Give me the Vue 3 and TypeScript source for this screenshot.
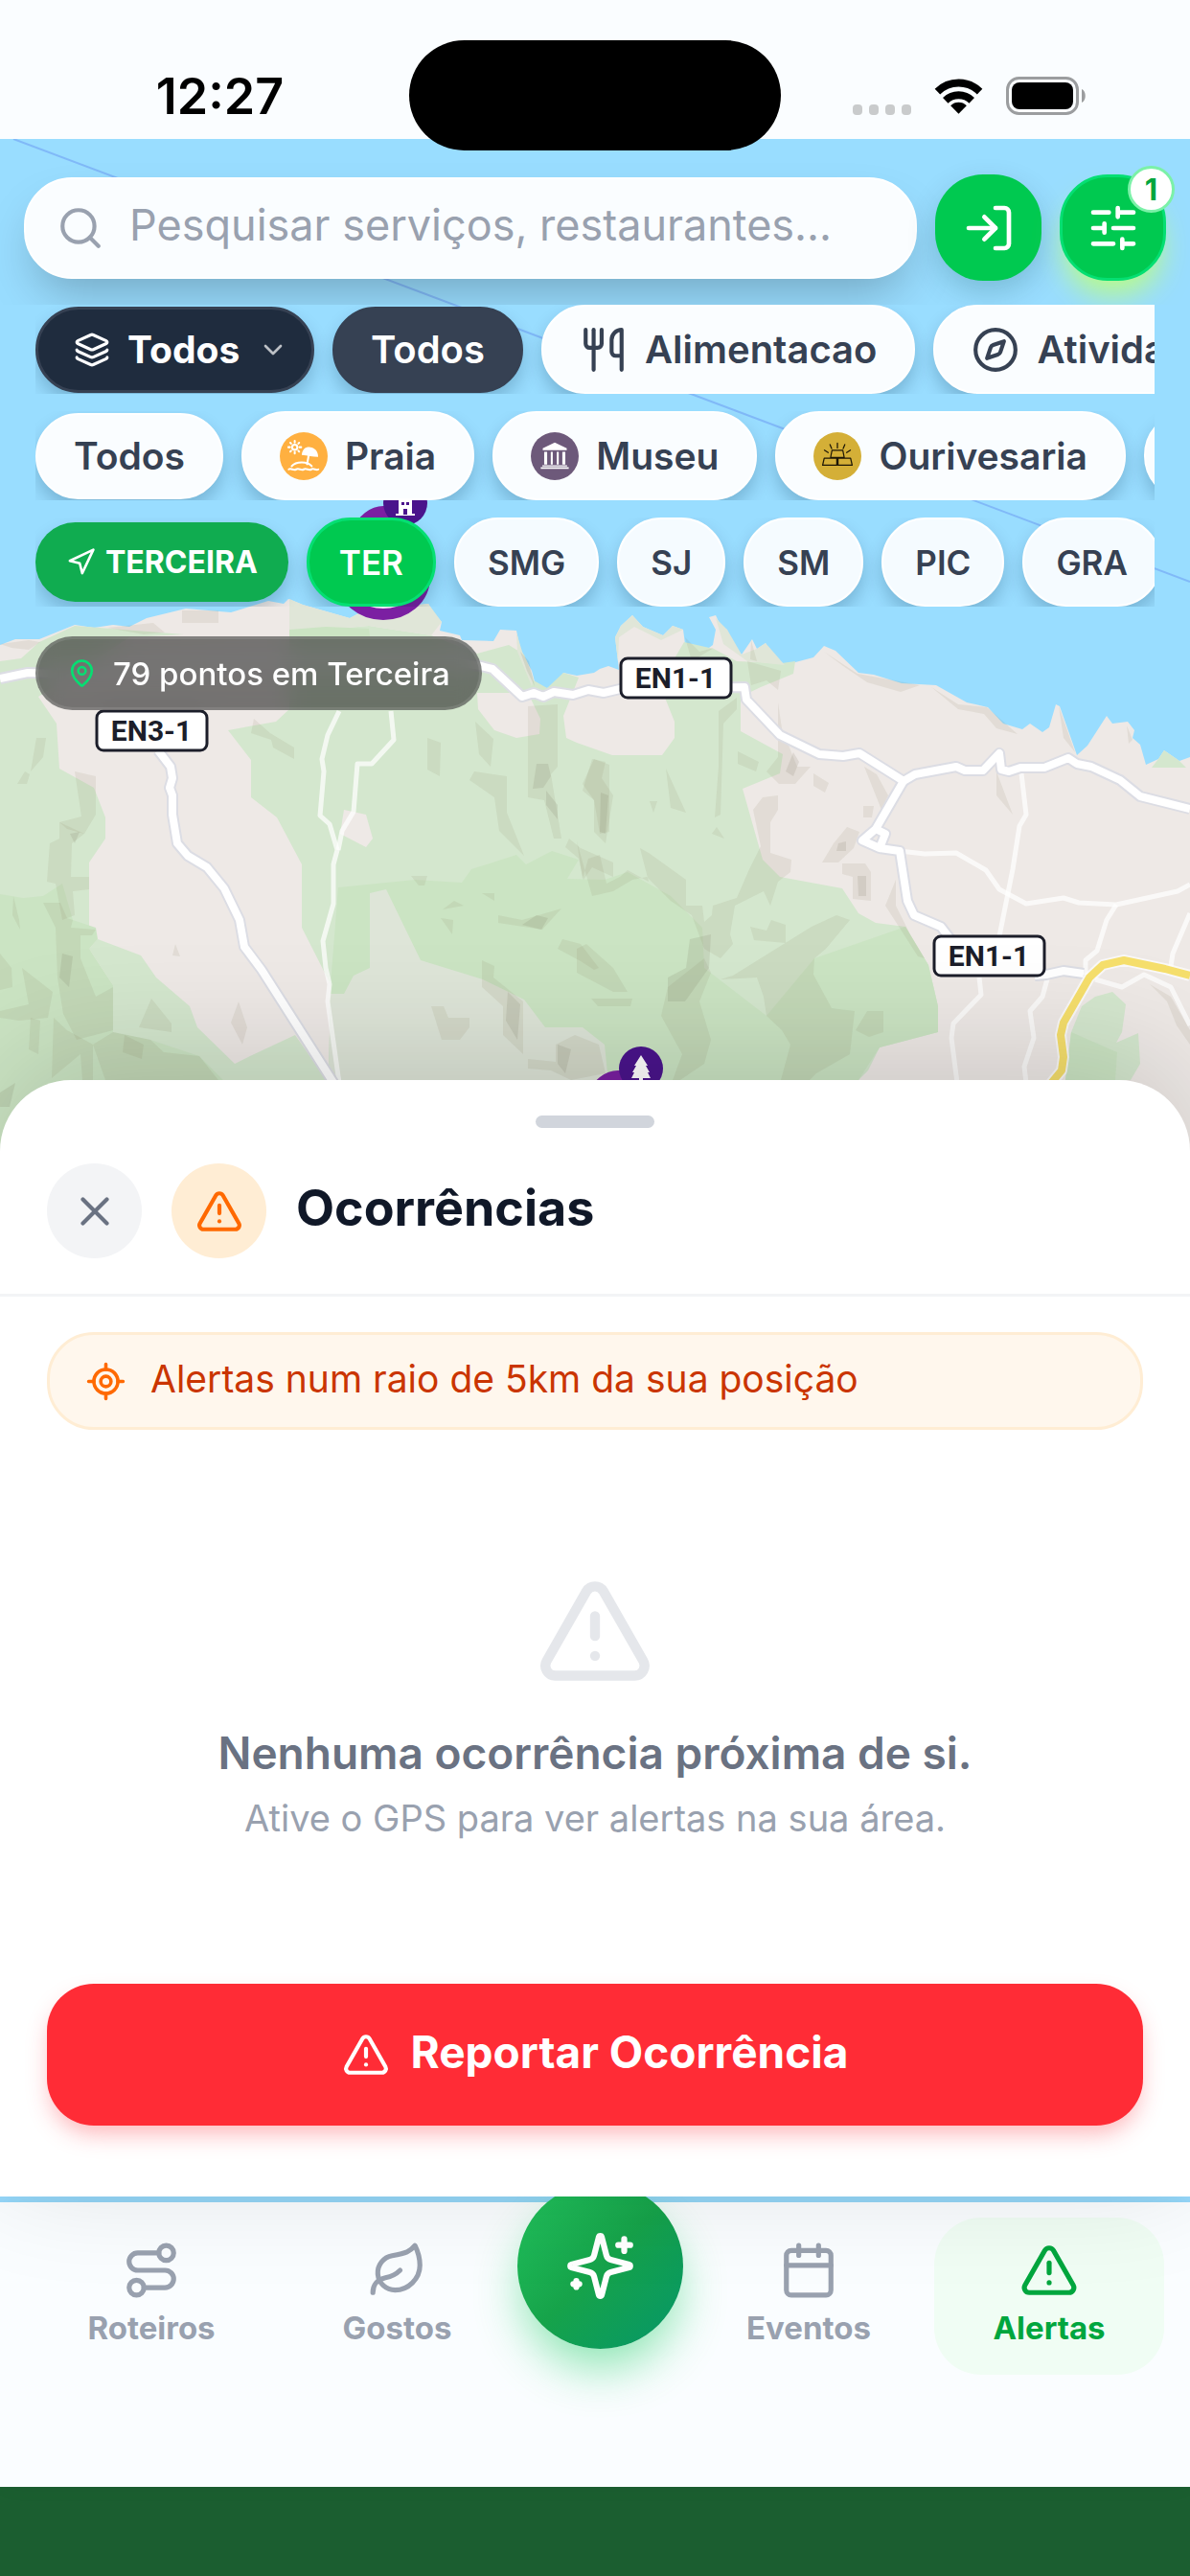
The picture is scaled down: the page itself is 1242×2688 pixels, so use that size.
<script setup lang="ts">
import { h, ref } from 'vue'

const icons: Record<string, string> = {
  search: '<path d="m21 21-4.34-4.34"/><circle cx="11" cy="11" r="8"/>',
  login: '<path d="m10 17 5-5-5-5"/><path d="M15 12H3"/><path d="M15 3h4a2 2 0 0 1 2 2v14a2 2 0 0 1-2 2h-4"/>',
  sliders:
    '<path d="M10 5H3M12 19H3M14 3v4M16 17v4M21 12h-9M21 19h-5M21 5h-7M8 10v4M8 12H3"/>',
  layers:
    '<path d="M12.83 2.18a2 2 0 0 0-1.66 0L2.6 6.08a1 1 0 0 0 0 1.83l8.58 3.91a2 2 0 0 0 1.66 0l8.58-3.9a1 1 0 0 0 0-1.83z"/><path d="M2 12a1 1 0 0 0 .58.91l8.6 3.91a2 2 0 0 0 1.65 0l8.58-3.9A1 1 0 0 0 22 12"/><path d="M2 17a1 1 0 0 0 .58.91l8.6 3.91a2 2 0 0 0 1.65 0l8.58-3.9A1 1 0 0 0 22 17"/>',
  chevron: '<path d="m6 9 6 6 6-6"/>',
  utensils:
    '<path d="M3 2v7c0 1.1.9 2 2 2h4a2 2 0 0 0 2-2V2"/><path d="M7 2v20"/><path d="M21 15V2a5 5 0 0 0-5 5v6c0 1.1.9 2 2 2h3Zm0 0v7"/>',
  compass:
    '<circle cx="12" cy="12" r="10"/><path d="m16.24 7.76-1.804 5.411a2 2 0 0 1-1.265 1.265L7.76 16.24l1.804-5.411a2 2 0 0 1 1.265-1.265z"/>',
  navigation: '<path d="M3 11 22 2 13 21 11 13Z"/>',
  pin: '<path d="M20 10c0 4.993-5.539 10.193-7.399 11.799a1 1 0 0 1-1.202 0C9.539 20.193 4 14.993 4 10a8 8 0 0 1 16 0"/><circle cx="12" cy="10" r="3"/>',
  close: '<path d="M18 6 6 18"/><path d="m6 6 12 12"/>',
  alert:
    '<path d="m21.73 18-8-14a2 2 0 0 0-3.48 0l-8 14A2 2 0 0 0 4 21h16a2 2 0 0 0 1.73-3"/><path d="M12 9v4"/><path d="M12 17h.01"/>',
  locate:
    '<path d="M2 12h3M19 12h3M12 2v3M12 19v3"/><circle cx="12" cy="12" r="7"/><circle cx="12" cy="12" r="3"/>',
  route:
    '<circle cx="6" cy="19" r="3"/><path d="M9 19h8.5a3.5 3.5 0 0 0 0-7h-11a3.5 3.5 0 0 1 0-7H15"/><circle cx="18" cy="5" r="3"/>',
  leaf: '<path d="M11 20A7 7 0 0 1 9.8 6.1C15.5 5 17 4.48 19 2c1 2 2 4.18 2 8 0 5.5-4.78 10-10 10Z"/><path d="M2 21c0-3 1.85-5.36 5.08-6C9.5 14.52 12 13 13 12"/>',
  calendar: '<path d="M8 2v4M16 2v4"/><rect width="18" height="18" x="3" y="4" rx="2"/><path d="M3 10h18"/>',
  sparkles:
    '<path d="M9.937 15.5A2 2 0 0 0 8.5 14.063l-6.135-1.582a.5.5 0 0 1 0-.962L8.5 9.936A2 2 0 0 0 9.937 8.5l1.582-6.135a.5.5 0 0 1 .963 0L14.063 8.5A2 2 0 0 0 15.5 9.937l6.135 1.581a.5.5 0 0 1 0 .964L15.5 14.063a2 2 0 0 0-1.437 1.437l-1.582 6.135a.5.5 0 0 1-.963 0z"/><path d="M20 3v4M22 5h-4M4 17v2M5 18H3"/>',
  beach:
    '<g fill="none" stroke="#fff" stroke-width="1"><circle cx="7.500" cy="7.500" r="1.300"/><path d="M7.500 4.300v.8M7.500 9.900v.8M4.300 7.500h.8M9.900 7.500h.8M5.300 5.300l.4.4M9.300 9.300l.4.4M5.300 9.700l.4-.4M9.300 5.700l.4-.4"/><path d="M14.500 11.500 13.700 16"/><path d="M6 17c2-2.500 8-2.500 10 0M4.500 18.600c1.200-.8 2.300.8 3.700 0s2.500.8 3.800 0 2.500.8 3.800 0 2.300.8 3.500 0"/></g><path d="M11 11.400c.3-3 2-4.200 4.300-3.900s4 2 3.900 4.900c-2.600-.2-5.400-.6-8.200-1z" fill="#fff"/>',
  museum:
    '<path fill="#fff" d="M12 5.200 18 8v1H6V8zM6.700 9.800h1.500v6.400H6.700zM10 9.800h1v6.400h-1zM13 9.800h1v6.400h-1zM15.800 9.800h1.500v6.400h-1.500zM5.800 16.600h12.400v.6H5.800zM5 17.500h14v.9H5z"/>',
  gold: '<g fill="none" stroke="#1c1606" stroke-width=".6"><path d="M9.300 9h5.400l.7 3.600H8.600zM5.400 13h6.300v3.500H4.600zM12.300 13h6.300l.8 3.500h-7.100zM12 5.500v2.400M8.300 6.200l.8 2M15.700 6.200l-.8 2M5.500 9l1.900 1.200M18.500 9l-1.900 1.200"/></g>',
}

const solid: Record<string, boolean> = { beach: true, museum: true, gold: true }

const Icon = (props: { name: string; stroke?: number }) =>
  h('svg', {
    viewBox: '0 0 24 24',
    fill: 'none',
    stroke: props.name in solid ? 'none' : 'currentColor',
    'stroke-width': props.stroke ?? 2,
    'stroke-linecap': 'round',
    'stroke-linejoin': 'round',
    'aria-hidden': 'true',
    innerHTML: icons[props.name],
  })
Icon.props = ['name', 'stroke']

const query = ref('')
const group = ref('Todos')

const categories = [
  { label: 'Alimentacao', icon: 'utensils' },
  { label: 'Atividades', icon: 'compass' },
]
const types = [
  { label: 'Praia', icon: 'beach', tone: 'amber' },
  { label: 'Museu', icon: 'museum', tone: 'plum' },
  { label: 'Ourivesaria', icon: 'gold', tone: 'gold' },
]
const islands = ['TER', 'SMG', 'SJ', 'SM', 'PIC', 'GRA']

const shades = [
  '38,770 48,770 45,790 32,805', '26,805 31,808 28,818 18,818', '78,805 100,810 100,850 88,870 70,865 62,858 85,852',
  '52,880 62,875 62,858 88,870 75,880 74,915 93,915 93,928 76,930 78,955 65,960 58,922 49,920',
  '45,942 63,942 70,958 76,960 74,968 100,970 96,976 84,976 84,1000 100,1040 118,1030 118,1075 80,1085 66,1058 60,1020 58,968',
  '0,995 12,1010 13,1030 0,1033', '23,1010 55,1035 50,1062 20,1065 0,1062 0,1055 30,1048', '32,1062 42,1065 40,1100 30,1095',
  '56,1062 70,1075 97,1090 97,1127 86,1127 84,1100 54,1125', '14,935 20,960 21,970 13,955',
  '118,1077 157,1085 171,1098 208,1102 228,1127 110,1127 97,1090',
  '158,1042 179,1068 179,1077 145,1072', '130,1080 150,1090 148,1105 128,1098',
  '265,750 282,765 307,780 307,792 285,780 283,772 262,765', '183,985 188,998 180,997', '249,1045 258,1072 253,1090 241,1067',
  '446,770 460,775 459,810 446,803', '496,753 515,771 512,800 500,787', '495,805 529,810 529,848 547,893 521,867 516,832 490,814',
  '551,737 582,735 582,800 575,808 586,875 578,875 568,835 551,832', '618,792 632,795 628,812 640,830 632,880 620,868 620,835 608,825',
  '429,914 446,914 443,924 437,924', '594,875 606,885 640,900 640,915 618,905 609,918 604,896 590,884',
  '503,932 516,932 516,940', '474,940 484,945 462,949', '460,958 473,960 472,975', '520,955 545,960 586,948 566,970 520,963',
  '587,980 606,985 625,1010 620,1012 606,1003 582,990', '503,1002 516,1008 515,1020 546,1045 546,1100 525,1080 525,1050 503,1030',
  '450,1050 463,1050 468,1062 490,1062 490,1072 480,1085 461,1085', '551,1105 580,1108 580,1090 600,1080 625,1090 632,1120 596,1127 575,1117 551,1115',
  '602,878 608,917 614,896 626,892 633,922 647,915 655,908 677,920 668,885 677,890 716,918 716,945 733,945 735,962 743,955 744,945 769,937 782,907 794,883 786,845 796,832 812,830 812,845 804,858 804,890 826,897 825,910 812,920 804,945 797,930 767,945 762,975 765,985 752,1000 735,990 722,955 700,940 690,930 675,915 660,918 640,930 618,935',
  '752,1022 765,1018 847,967 873,955 887,960 862,990 850,1000 849,1017 868,1052 892,1055 887,1100 852,1120 845,1127 815,1127 825,1090 816,1075 800,1060 797,1040 790,1020',
  '697,1030 735,1000 742,1015 730,1045 742,1085 735,1110 710,1127 702,1127 712,1100 690,1060',
  '602,990 612,985 640,1010 655,1035 640,1035 602,1015', '783,967 800,971 805,960 820,965 820,984 787,981',
  '608,818 620,792 636,798 636,868 626,870 620,835', '695,802 716,848 700,843', '678,836 686,836 682,848',
  '750,742 769,728 769,740 755,755 752,850 746,853 750,800', '770,784 792,795 789,805 770,797', '748,863 756,875 743,870',
  '812,733 816,760 832,800 846,800 830,818 813,818 800,805 812,790', '849,807 865,817 861,827 849,820', '884,863 897,868 891,885 875,900 858,900 870,880',
  '902,800 915,808 927,830 920,845', '901,841 912,841 910,853 901,853', '879,901 903,901 909,910 909,940 890,938 890,915 879,912',
  '617,1042 660,1042 658,1050 624,1050', '905,1055 922,1055 922,1077 907,1082 893,1075',
  '784,668 790,690 783,688', '715,665 730,680 745,676 722,690', '780,690 815,700 812,720 800,710 784,715',
  '1040,805 1057,850 1040,830', '935,918 935,945 950,975 965,1000 958,998 924,945', '860,680 895,703 960,715 940,722 905,712 880,695',
  '972,717 1000,735 1030,738 1062,766 1040,760 1027,745 1000,740', '1105,737 1122,785 1110,770', '1176,757 1182,772 1178,776',
  '1200,1027 1222,1040 1242,1075 1242,1090 1228,1070 1218,1045',
  '112,655 160,650 172,660 150,662', '190,637 228,637 228,650 190,650', '0,672 30,668 42,670 30,678 12,676',
]

const shadesDeep = [
  '65,995 76,998 72,1030 62,1020', '73,870 83,868 78,880', '530,1035 543,1048 540,1085 528,1065', '582,1090 596,1095 590,1120 582,1110',
  '560,797 572,797 575,810 567,822 556,823', '570,825 582,840 582,855 570,840', '627,827 635,830 632,870 626,868', '0,1140 16,1130 10,1155 0,1155',
  '720,980 742,975 740,1010 715,1045 697,1045 697,1020 716,1010', '828,785 834,795 828,810 820,805', '895,914 904,914 904,935 896,935',
  '875,880 883,878 883,888 873,888', '560,955 572,958 565,970 545,965', '543,680 552,690 558,716 550,700',
]

const mainRoads = [
  '0,708 29,702 60,703 260,690 470,690 502,695 514,698 545,727 557,723 567,727 578,722 598,725 614,720 630,723 647,719 777,717 779,730 814,767 855,787 880,789 897,786 943,815 955,808 998,800 1007,804 1026,804 1043,786 1045,803 1053,805 1065,801 1090,801 1115,791 1124,797 1139,800 1169,814 1190,831 1242,844',
  '943,815 914,865 924,870 918,885 900,877 914,865', '918,885 939,888 947,940 954,955 982,967 992,980', '1080,1018 1092,1017 1110,1013 1131,1016',
  '165,783 178,800 180,812 177,822 180,830 180,850 185,880 196,893 216,905 234,927 250,960 255,988 273,1012 352,1136',
]

const minorRoads = [
  '354,742 342,767 336,792 338,805 334,851 344,860 352,887 348,902 348,943 337,982 340,1010 344,1027 342,1045 354,1130',
  '408,742 411,772 388,797 373,797 369,847 357,867 353,887',
  '1066,807 1071,850 1064,862 1057,907 1043,977',
  '939,888 965,891 998,890 1029,908 1043,928 1071,943 1110,937 1126,942 1165,944 1229,930 1242,923',
  '1165,944 1155,960 1145,992 1133,1002 1133,1017', '1242,953 1224,995 1222,1008', '1143,1022 1171,1030 1194,1017 1222,1030 1242,1070',
  '1022,1020 1024,1038 995,1068 993,1083 999,1130', '1094,1018 1088,1040 1075,1055 1079,1083 1069,1113 1071,1130',
]

const highway = '1094,1134 1108,1117 1110,1103 1107,1080 1110,1067 1137,1020 1151,1007 1173,1002 1216,1011 1242,1018'
const marker =
  'M400 534C424 534 443 578 443 602C443 626 422 641 400 641C378 641 357 626 357 602C357 578 376 534 400 534Z'

const signs = [
  { x: 101, y: 742, text: 'EN3-1' },
  { x: 648, y: 687, text: 'EN1-1' },
  { x: 975, y: 977, text: 'EN1-1' },
]
</script>

<template>
  <div class="screen">
    <header class="status">
      <time class="clock">12:27</time>
      <div class="island"></div>
      <div class="signals">
        <span class="dots"><i v-for="n in 4" :key="n"></i></span>
        <svg class="wifi" viewBox="0 0 52 38" aria-hidden="true">
          <path d="M3.500 14.500A32 32 0 0 1 48.500 14.500M12 24A20 20 0 0 1 40 24" fill="none" stroke="#000" stroke-width="8" />
          <path d="M26 38 17.500 29.500A12 12 0 0 1 34.500 29.500Z" />
        </svg>
        <svg class="battery" viewBox="0 0 84 40" aria-hidden="true">
          <rect x="1.500" y="1.500" width="73" height="37" rx="12" fill="none" stroke="#9b9d9f" stroke-width="3" />
          <rect x="6" y="6" width="64" height="28" rx="8" />
          <path d="M79 13c5 2 5 12 0 14z" fill="#9b9d9f" />
        </svg>
      </div>
    </header>

    <main class="stage">
      <svg class="map" viewBox="0 145 1242 1150" preserveAspectRatio="xMidYMin slice" role="img" aria-label="Mapa da ilha Terceira">
        <path d="M14 145 1242 607" stroke="#80b9f8" stroke-width="2" />
        <polygon
          fill="#eee9e6"
          points="0,673 16,667 41,667 78,652 98,655 118,652 135,654 153,645 194,635 241,639 280,627 296,630 301,625 316,631 365,645 380,637 447,630 453,640 461,649 459,658 480,663 482,668 515,669 522,657 539,658 543,677 555,700 559,715 571,718 582,713 588,702 602,705 620,702 626,698 635,695 646,699 642,665 648,653 660,642 671,654 692,663 702,653 713,657 715,672 733,681 744,673 747,657 740,644 747,642 753,655 759,657 761,670 774,683 785,667 790,677 799,671 805,687 819,694 849,686 860,674 872,679 896,702 912,704 941,713 977,715 1009,733 1031,738 1047,755 1067,761 1075,755 1088,764 1095,759 1102,735 1106,737 1124,788 1135,778 1155,747 1161,755 1177,753 1184,762 1182,770 1190,777 1196,798 1209,792 1215,783 1231,794 1242,790 1242,1300 0,1300"
        />
        <g fill="#d4e7ce">
          <polygon points="0,690 22,687 41,670 78,653 192,662 135,665 40,727 59,755 62,802 98,822 110,853 110,875 93,900 93,987 100,1010 118,1028 118,1077 157,1085 171,1098 208,1102 233,1127 300,1300 0,1300" />
          <polygon points="238,762 288,753 302,740 302,660 385,653 450,663 498,682 531,673 547,683 557,710 571,718 588,702 604,707 588,747 591,770 602,775 639,788 691,788 704,770 704,753 694,728 704,687 714,670 745,677 769,690 816,692 830,690 828,703 794,717 773,727 773,763 817,787 814,807 775,823 796,897 814,915 879,927 896,953 914,963 945,967 969,1007 979,1050 979,1077 918,1093 906,1117 896,1127 343,1127 345,1027 315,968 315,902 289,853 262,832 262,793" />
          <polygon points="102,980 147,997 163,1020 198,1050 206,1072 245,1110 261,1102 308,1080 343,1130 208,1130 171,1098 118,1077 118,1028 93,990" />
          <polygon points="1129,1050 1143,1040 1161,1035 1175,1048 1171,1077 1165,1088 1188,1078 1190,1110 1180,1127 1112,1127 1118,1077" />
          <polygon points="1202,801 1209,792 1215,783 1231,794 1238,801" />
        </g>
        <g fill="#e0e6d8">
          <polygon points="302,625 316,631 365,645 380,637 447,630 461,649 450,663 385,653 302,660" />
          <polygon points="539,660 545,680 557,708 555,716 540,680" />
          <polygon points="642,665 648,653 660,642 671,654 692,663 702,653 713,657 690,668 662,654 646,665 645,690" />
          <polygon points="747,645 759,657 774,683 790,677 799,671 819,694 780,690 755,672" />
        </g>
        <g fill="#cbe4c3">
          <polygon points="302,657 340,654 385,656 386,664 302,664" />
          <polygon points="0,933 24,937 45,935 65,922 76,960 100,968 102,980 93,990 118,1028 118,1077 157,1085 208,1102 233,1127 300,1300 0,1300" />
          <polygon points="353,926 433,918 482,921 492,907 539,892 549,902 576,888 604,897 592,917 631,918 655,910 700,935 733,968 735,1010 800,1060 850,1000 945,967 969,1007 979,1050 979,1077 918,1093 896,1127 343,1127 345,1027" />
          <polygon points="1118,1077 1166,1098 1164,1127 1112,1127" />
        </g>
        <polygon fill="#dee5d8" points="386,932 403,928 439,1002 504,1022 547,1043 569,1072 608,1072 631,1090 635,1130 343,1130 345,1037 359,1037 369,1018 386,1010" />
        <g fill="#eee9e6">
          <polygon points="359,845 382,850 389,875 382,884 355,870" />
          <polygon points="498,723 551,723 564,750 563,766 539,770 516,762 499,740" />
        </g>
        <g fill="#8c8264" fill-opacity=".12">
          <polygon v-for="points in shades" :key="points" :points="points" />
        </g>
        <g fill="#6e6450" fill-opacity=".13">
          <polygon v-for="points in shadesDeep" :key="points" :points="points" />
        </g>
        <g fill="none" stroke-linejoin="round">
          <polyline v-for="points in minorRoads" :key="points" :points="points" stroke="#fff" stroke-opacity=".72" stroke-width="5" />
          <polyline v-for="points in mainRoads" :key="'c' + points" :points="points" stroke="#dcdde4" stroke-width="12" />
          <polyline v-for="points in mainRoads" :key="'r' + points" :points="points" stroke="#fff" stroke-width="8" />
          <polyline :points="highway" stroke="#fff" stroke-opacity=".7" stroke-width="12" />
          <polyline :points="highway" stroke="#f6df6c" stroke-width="8" />
        </g>
        <g v-for="sign in signs" :key="sign.x">
          <rect :x="sign.x" :y="sign.y" width="115" height="41" rx="7" fill="#fff" stroke="#1c1e2a" stroke-width="3" />
          <text class="sign" :x="sign.x + 57" :y="sign.y + 31" text-anchor="middle">{{ sign.text }}</text>
        </g>
        <path :d="marker" fill="#f3eaf6" stroke="#7b1fa2" stroke-width="12" />
        <circle cx="423" cy="525" r="23" fill="#4a148c" />
        <path d="M416 514h14v22h3v2h-20v-2h3zM419 518v3h3v-3zM424 518v3h3v-3zM419 524v3h3v-3zM424 524v3h3v-3zM421 531v6h4v-6z" fill="#fff" fill-rule="evenodd" />
        <path :d="marker" fill="#f3eaf6" stroke="#7b1fa2" stroke-width="12" transform="translate(245 589)" />
        <circle cx="669" cy="1115" r="23" fill="#4a148c" />
        <path d="M669 1101 676 1112h-2l4 7h-2l3 6h-8v6h-4v-6h-8l3-6h-2l4-7h-2z" fill="#fff" />
      </svg>

      <section class="toolbar">
        <label class="search">
          <Icon name="search" />
          <input v-model="query" type="search" placeholder="Pesquisar serviços, restaurantes..." aria-label="Pesquisar" />
        </label>
        <button class="square" type="button" aria-label="Entrar"><Icon name="login" /></button>
        <button class="square outlined" type="button" aria-label="Filtros">
          <Icon name="sliders" />
          <span class="badge">1</span>
        </button>
      </section>

      <div class="filters">
        <div class="row">
          <label class="picker">
            <Icon class="layers" name="layers" />
            <select v-model="group" aria-label="Grupo">
              <option>Todos</option>
            </select>
            <Icon class="caret" name="chevron" />
          </label>
          <button class="chip plain active" type="button">Todos</button>
          <button v-for="item in categories" :key="item.label" class="chip" type="button">
            <Icon class="glyph" :name="item.icon" />{{ item.label }}
          </button>
        </div>
        <div class="row types">
          <button class="chip plain" type="button">Todos</button>
          <button v-for="item in types" :key="item.label" class="chip" type="button">
            <span class="disc" :class="item.tone"><Icon :name="item.icon" /></span>{{ item.label }}
          </button>
          <button class="chip" type="button" aria-label="Mais"><span class="disc plum"></span></button>
        </div>
        <div class="row">
          <button class="locate" type="button"><Icon name="navigation" />TERCEIRA</button>
          <button v-for="code in islands" :key="code" class="chip code" :class="{ current: code === 'TER' }" type="button">
            {{ code }}
          </button>
        </div>
        <p class="count"><Icon name="pin" />79 pontos em Terceira</p>
      </div>

      <section class="sheet" aria-labelledby="sheet-title">
        <div class="handle"></div>
        <header class="sheet-head">
          <button class="round" type="button" aria-label="Fechar"><Icon name="close" /></button>
          <span class="round warm"><Icon name="alert" /></span>
          <h1 id="sheet-title">Ocorrências</h1>
        </header>
        <div class="sheet-body">
          <p class="notice"><Icon name="locate" /><span class="line">Alertas num raio de 5km da sua posição</span></p>
          <div class="empty">
            <Icon name="alert" />
            <h2>Nenhuma ocorrência próxima de si.</h2>
            <p>Ative o GPS para ver alertas na sua área.</p>
          </div>
          <button class="report" type="button"><Icon name="alert" /><span class="line">Reportar Ocorrência</span></button>
        </div>
      </section>
    </main>

    <nav class="tabs">
      <a class="tab" href="#roteiros"><Icon name="route" />Roteiros</a>
      <a class="tab" href="#gostos"><Icon name="leaf" />Gostos</a>
      <button class="fab" type="button" aria-label="Assistente"><Icon name="sparkles" /></button>
      <a class="tab" href="#eventos"><Icon name="calendar" />Eventos</a>
      <a class="tab on" href="#alertas" aria-current="page"><Icon name="alert" />Alertas</a>
    </nav>
    <div class="base"></div>
  </div>
</template>

<style>
body {
  margin: 0;
}
</style>

<style scoped>
.screen {
  display: flex;
  flex-direction: column;
  min-height: 100vh;
  overflow: hidden;
  isolation: isolate;
  background: #fafdff;
  font-family: Inter, 'Noto Sans', sans-serif;
  color: #364153;
}
.screen * {
  box-sizing: border-box;
}
svg {
  display: block;
  flex: none;
}
button,
select,
input {
  border: 0;
  margin: 0;
  padding: 0;
  background: none;
  color: inherit;
  font: inherit;
}
h1,
h2,
p {
  margin: 0;
}

/* status bar */
.status {
  position: relative;
  z-index: 4;
  display: grid;
  grid-template-columns: 1fr 388px 1fr;
  align-items: end;
  height: 145px;
}
.clock {
  justify-self: center;
  margin: 0 0 12px 32px;
  color: #000;
  font-size: 52px;
  font-weight: 600;
  line-height: 64px;
}
.island {
  height: 115px;
  margin-bottom: -12px;
  border-radius: 58px;
  background: #000;
}
.signals {
  display: flex;
  align-items: center;
  gap: 24px;
  justify-self: end;
  margin: 0 108px 25px 0;
}
.dots {
  display: flex;
  gap: 7px;
  align-self: end;
}
.dots i {
  width: 10px;
  height: 11px;
  border-radius: 4px;
  background: #c9cbcc;
}
.wifi {
  width: 51px;
  height: 38px;
}
.battery {
  width: 84px;
  height: 40px;
}

/* map and floating controls */
.stage {
  position: relative;
  display: flex;
  flex: 1 0 auto;
  flex-direction: column;
  padding-bottom: 6px;
}
.stage::before {
  content: '';
  position: absolute;
  inset: 0;
  background: #99ddff;
}
.map {
  position: absolute;
  top: 0;
  left: 0;
  width: 100%;
  height: 1150px;
}
.sign {
  fill: #1c1e2a;
  font-family: Roboto, sans-serif;
  font-size: 30px;
  font-weight: 700;
}
.toolbar {
  position: relative;
  display: flex;
  align-items: center;
  gap: 19px;
  overflow: hidden;
  padding: 37px 25px 25px;
}
.search {
  display: flex;
  flex: 1;
  align-items: center;
  gap: 26px;
  height: 106px;
  min-width: 0;
  padding: 0 32px;
  border: 2px solid #fff;
  border-radius: 50px;
  background: #fafdff;
  box-shadow: 0 25px 50px -12px rgba(0, 0, 0, 0.25);
  color: #99a1af;
}
.search svg {
  width: 50px;
  height: 50px;
}
.search input {
  flex: 1;
  min-width: 0;
  padding-bottom: 6px;
  outline: none;
  color: #364153;
  font-size: 45px;
  line-height: 56px;
}
.search input::placeholder {
  color: #99a1af;
  opacity: 1;
}
.square {
  position: relative;
  display: grid;
  place-items: center;
  width: 111px;
  height: 111px;
  border-radius: 50px;
  background: #00c950;
  box-shadow: 0 12px 30px rgba(0, 60, 60, 0.2);
  color: #fff;
}
.square svg {
  width: 56px;
  height: 56px;
}
.outlined {
  border: 3px solid #05df72;
  box-shadow: 0 20px 30px -6px rgba(190, 255, 120, 0.9);
}
.badge {
  position: absolute;
  top: -12px;
  right: -12px;
  width: 49px;
  height: 49px;
  border: 3px solid #7bf1a8;
  border-radius: 50%;
  background: #fff;
  color: #00a63e;
  font-size: 31px;
  font-weight: 700;
  line-height: 43px;
  text-align: center;
}
.filters {
  position: relative;
  display: flex;
  flex-direction: column;
  align-items: flex-start;
  gap: 18px;
  padding: 0 37px;
}
.row {
  display: flex;
  align-items: center;
  gap: 19px;
  width: 100%;
  height: 93px;
  overflow: hidden;
}
.chip,
.picker,
.locate {
  display: flex;
  flex: none;
  align-items: center;
  box-shadow: 0 10px 18px rgba(0, 40, 70, 0.22);
  white-space: nowrap;
}
.chip {
  gap: 18px;
  height: 93px;
  padding: 0 38px;
  border: 2px solid #fff;
  border-radius: 46px;
  background: #fafdff;
  font-size: 40px;
  font-weight: 600;
}
.types .chip {
  font-size: 39px;
}
.plain {
  height: 90px;
}
.active {
  border-color: #364153;
  background: #364153;
  color: #fff;
}
.glyph,
.disc,
.disc svg {
  width: 50px;
  height: 50px;
}
.disc {
  border-radius: 50%;
}
.amber {
  background: #ffb040;
}
.plum {
  background: #6d597a;
}
.gold {
  background: #d4af37;
}
.picker {
  gap: 18px;
  height: 90px;
  padding: 0 24px 0 37px;
  border: 3px solid #364153;
  border-radius: 46px;
  background: #1f2c3e;
  color: #fff;
  font-size: 39px;
  font-weight: 700;
}
.picker select {
  appearance: none;
  outline: none;
}
.layers {
  width: 38px;
  height: 38px;
}
.caret {
  width: 32px;
  height: 32px;
  opacity: 0.7;
}
.locate {
  gap: 10px;
  height: 83px;
  padding: 0 32px;
  border-radius: 42px;
  background: #10ac50;
  color: #fff;
  font-size: 32px;
  font-weight: 700;
}
.locate svg,
.count svg {
  width: 31px;
  height: 31px;
}
.code {
  padding: 0 33px;
  font-size: 35px;
  background: #f5fbff;
}
.current {
  padding: 0 31px;
  border: 3px solid #05df72;
  background: #00c950;
  color: #fff;
}
.count {
  display: flex;
  align-items: center;
  gap: 17px;
  height: 77px;
  margin-top: 13px;
  padding: 0 30px;
  border: 3px solid rgba(255, 255, 255, 0.1);
  border-radius: 39px;
  background: rgba(35, 35, 35, 0.6);
  backdrop-filter: blur(12px);
  color: #fff;
  font-size: 33px;
  font-weight: 500;
}
.count svg {
  color: #05df72;
}

/* bottom sheet */
.sheet {
  position: relative;
  z-index: 3;
  margin-top: auto;
  border-radius: 74px 74px 0 0;
  background: #fff;
  box-shadow: 0 -25px 124px rgba(0, 0, 0, 0.15);
}
.handle {
  width: 124px;
  height: 13px;
  margin: 0 auto;
  border-radius: 7px;
  background: #d1d5dc;
  transform: translateY(37px);
}
.sheet-head {
  display: flex;
  align-items: center;
  gap: 31px;
  padding: 74px 49px 37px;
  border-bottom: 3px solid #f3f4f6;
}
.round {
  display: grid;
  place-items: center;
  width: 99px;
  height: 99px;
  border-radius: 50%;
  background: #f3f4f6;
  color: #6a7282;
}
.warm {
  background: #ffedd4;
  color: #ff6900;
}
.round svg {
  width: 50px;
  height: 50px;
}
h1 {
  padding-bottom: 6px;
  color: #101828;
  font-size: 52px;
  font-weight: 700;
  line-height: 64px;
}
.line {
  padding-bottom: 6px;
}
.sheet-body {
  padding: 37px 49px 74px;
}
.notice {
  display: flex;
  align-items: center;
  gap: 25px;
  height: 102px;
  padding: 0 37px;
  border: 3px solid #ffedd4;
  border-radius: 49px;
  background: #fff7ed;
  color: #ca3500;
  font-size: 39px;
}
.notice svg {
  width: 43px;
  height: 43px;
  color: #ff6900;
}
.empty {
  display: flex;
  flex-direction: column;
  align-items: center;
  padding: 148px 0;
  text-align: center;
}
.empty svg {
  width: 124px;
  height: 124px;
  color: #e5e7eb;
}
h2 {
  margin-top: 37px;
  color: #6a7282;
  font-size: 46px;
  font-weight: 600;
  line-height: 56px;
}
.empty p {
  margin-top: 15px;
  color: #99a1af;
  font-size: 38px;
  line-height: 50px;
}
.report {
  display: flex;
  align-items: center;
  justify-content: center;
  gap: 22px;
  width: 100%;
  height: 148px;
  border-radius: 49px;
  background: #ff2c36;
  box-shadow: 0 12px 24px -4px rgba(251, 44, 54, 0.35);
  color: #fff;
  font-size: 46px;
  font-weight: 700;
}
.report svg {
  width: 50px;
  height: 50px;
}

/* tab bar */
.tabs {
  position: relative;
  z-index: 1;
  display: grid;
  grid-template-columns: 262fr 251fr 173px 262fr 240fr;
  align-items: start;
  padding: 16px 27px 117px;
  background: #fafdff;
  box-shadow: 0 -8px 30px rgba(0, 0, 0, 0.06);
}
.tab {
  display: flex;
  flex-direction: column;
  align-items: center;
  gap: 9px;
  height: 164px;
  padding-top: 24px;
  border-radius: 49px;
  color: #99a1af;
  font-size: 33px;
  font-weight: 700;
  line-height: 40px;
  text-decoration: none;
}
.tab svg {
  width: 62px;
  height: 62px;
}
.on {
  background: #f0fdf4;
  color: #00a63e;
}
.fab {
  display: grid;
  place-items: center;
  width: 173px;
  height: 173px;
  margin-top: -36px;
  border-radius: 50%;
  background: linear-gradient(135deg, #22c55e, #16a34a 50%, #059669);
  box-shadow: 0 25px 50px -6px rgba(0, 201, 80, 0.45);
  color: #fff;
}
.fab svg {
  width: 75px;
  height: 75px;
}
.base {
  height: 93px;
  background: #1b5e30;
}
</style>
